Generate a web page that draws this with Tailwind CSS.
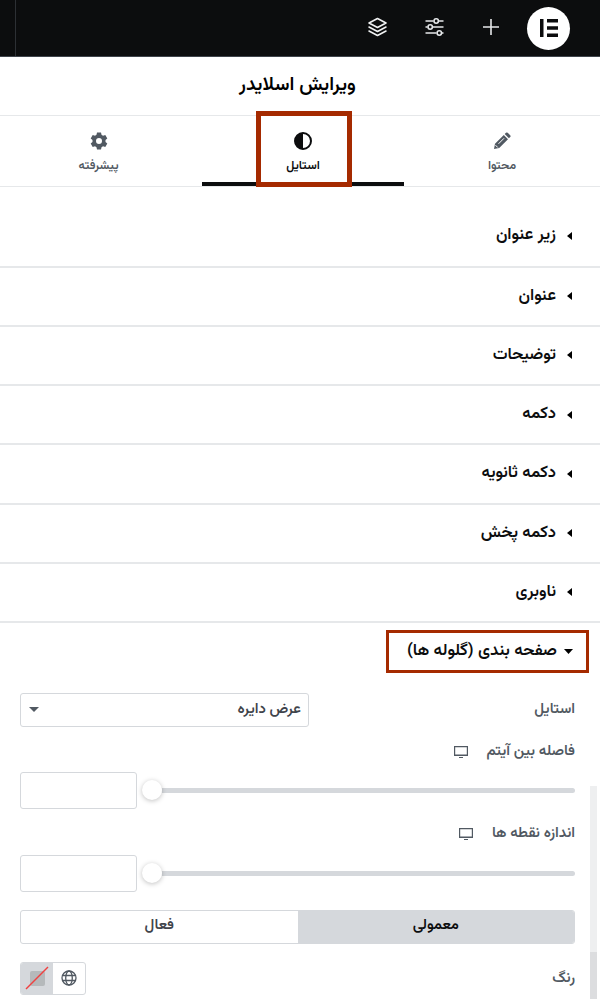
<!DOCTYPE html>
<html lang="fa" dir="rtl">

<head>
    <meta charset="UTF-8">
    <meta name="viewport" content="width=device-width, initial-scale=1.0">
    <script src="https://cdn.jsdelivr.net/npm/@tailwindcss/browser@4"></script>
    <title>ویرایش اسلایدر</title>
</head>

<body class="h-[999px] w-[600px] overflow-hidden bg-white font-['Vazirmatn','Noto_Sans_Arabic','DejaVu_Sans',sans-serif] text-[#0c0d0e]">
    <header class="flex h-[57px] items-center border-b border-[#3f444b] bg-[#0c0d0e] pr-[30px]">
        <div class="flex size-[43px] items-center justify-center rounded-full bg-white">
            <svg class="size-[18px]" viewBox="0 0 18 18" fill="#0c0d0e">
                <path d="M0 0h3.5v18H0zM7 0h11v3.6H7zM7 7.2h11v3.6H7zM7 14.4h11V18H7z" />
            </svg>
        </div>
        <svg class="mr-7 mb-0.5 size-4" viewBox="0 0 16 16" fill="none" stroke="#e6e8ea" stroke-width="1.6">
            <path d="M8 0v16M0 8h16" />
        </svg>
        <svg class="mr-[39px] mb-0.5 h-[18px] w-[19px]" viewBox="0 0 19 18" fill="none" stroke="#e6e8ea" stroke-width="1.6">
            <path d="M.5 3h8M14 3h4.500M.5 9h2M8 9h10.500M.5 15h11M17 15h1.500" />
            <circle cx="11.200" cy="3" r="2.200" />
            <circle cx="5.200" cy="9" r="2.200" />
            <circle cx="14.300" cy="15" r="2.200" />
        </svg>
        <svg class="mr-[38px] mb-0.5 h-5 w-[19px]" viewBox="0 0 19 20" fill="none" stroke="#f1f2f3" stroke-width="1.6" stroke-linejoin="round" stroke-linecap="round">
            <path d="M9.500 1.500L18 6l-8.500 4.500L1 6zM1 10l8.500 4.500L18 10M1 14l8.500 4.500L18 14" />
        </svg>
        <div class="mr-auto h-full w-4 border-r border-[#2d3034]"></div>
    </header>

    <h1 class="flex h-[59px] items-center justify-center border-b border-[#e6e8ea] pr-[5px] pb-0.5 text-[19.2px] font-semibold text-black">ویرایش اسلایدر</h1>

    <nav class="grid h-[71px] grid-cols-[196px_202px_202px] border-b border-[#e6e8ea] text-[12.3px] font-semibold text-[#515962]">
        <div class="flex flex-col items-center pt-4">
            <svg class="size-[18px]" viewBox="0 0 18 18" fill="#515962">
                <path d="M1 17l1-5.200L10.800 3l4.200 4.200L6.200 16zM11.700 2.100L13 .8q.8-.8 1.700 0l2.500 2.500q.8.900 0 1.700l-1.300 1.300z" />
                <path d="M5.500 11.800l5.500-5.500M2.500 13.200l2.300 2.300" stroke="#fff" stroke-width="1" />
            </svg>
            <span class="mt-[7px] leading-[18px]">محتوا</span>
        </div>
        <div class="relative flex flex-col items-center border-b-4 border-[#0c0d0e] pt-4 text-[#0c0d0e]">
            <svg class="size-[18px]" viewBox="0 0 18 18">
                <circle cx="9" cy="9" r="8" fill="#fff" stroke="#0c0d0e" stroke-width="2" />
                <path d="M9 1a8 8 0 0 0 0 16z" fill="#0c0d0e" />
            </svg>
            <span class="mt-[7px] leading-[18px]">استایل</span>
            <div class="absolute -top-[5px] left-[54px] h-[76px] w-24 border-[5px] border-[#a52a00]"></div>
        </div>
        <div class="flex flex-col items-center pt-4 pr-[5px]">
            <svg class="size-[18px]" viewBox="0 0 18 18" fill="#515962">
                <path fill-rule="evenodd" d="M7 .5h4l.5 2.300 1.500.9 2.300-.8 2 3.500-1.800 1.600v2l1.800 1.600-2 3.500-2.300-.8-1.500.9-.5 2.300H7l-.5-2.300-1.500-.9-2.300.8-2-3.500L2.500 10V8L.7 6.400l2-3.500 2.300.8 1.500-.9zM9 6a3 3 0 1 0 0 6 3 3 0 0 0 0-6z" />
            </svg>
            <span class="mt-[7px] leading-[18px]">پیشرفته</span>
        </div>
    </nav>

    <main>
        <ul class="mt-5 text-[16.6px] font-semibold">
            <li class="flex h-[60.500px] items-center gap-[11px] border-b-2 border-[#e6e8ea] pr-7 pb-px">
                <svg class="h-2 w-[5px]" viewBox="0 0 5 8"><path d="M5 0v8L0 4z" /></svg>
                <span>زیر عنوان</span>
            </li>
            <li class="flex h-[59.250px] items-center gap-[11px] border-b-2 border-[#e6e8ea] pr-7">
                <svg class="h-2 w-[5px]" viewBox="0 0 5 8"><path d="M5 0v8L0 4z" /></svg>
                <span>عنوان</span>
            </li>
            <li class="flex h-[59.250px] items-center gap-[11px] border-b-2 border-[#e6e8ea] pr-7">
                <svg class="h-2 w-[5px]" viewBox="0 0 5 8"><path d="M5 0v8L0 4z" /></svg>
                <span>توضیحات</span>
            </li>
            <li class="flex h-[59.250px] items-center gap-[11px] border-b-2 border-[#e6e8ea] pr-7">
                <svg class="h-2 w-[5px]" viewBox="0 0 5 8"><path d="M5 0v8L0 4z" /></svg>
                <span>دکمه</span>
            </li>
            <li class="flex h-[59.250px] items-center gap-[11px] border-b-2 border-[#e6e8ea] pr-7">
                <svg class="h-2 w-[5px]" viewBox="0 0 5 8"><path d="M5 0v8L0 4z" /></svg>
                <span>دکمه ثانویه</span>
            </li>
            <li class="flex h-[59.250px] items-center gap-[11px] border-b-2 border-[#e6e8ea] pr-7">
                <svg class="h-2 w-[5px]" viewBox="0 0 5 8"><path d="M5 0v8L0 4z" /></svg>
                <span>دکمه پخش</span>
            </li>
            <li class="flex h-[59.250px] items-center gap-[11px] border-b-2 border-[#e6e8ea] pr-7">
                <svg class="h-2 w-[5px]" viewBox="0 0 5 8"><path d="M5 0v8L0 4z" /></svg>
                <span>ناوبری</span>
            </li>
        </ul>

        <div class="mt-[6.500px] mr-[11px] flex h-[43px] w-[203px] items-center gap-[7px] border-[3px] border-[#a52a00] pr-[13px] text-[16.8px] font-semibold">
            <svg class="h-[5px] w-[9px] shrink-0" viewBox="0 0 9 5"><path d="M0 0h9L4.500 5z" /></svg>
            <span class="pt-px whitespace-nowrap">صفحه بندی (گلوله ها)</span>
        </div>

        <section class="mt-5 pr-[25px] pl-5 text-[14.900px] font-semibold text-[#515962]">
            <div class="flex h-[34px] items-center justify-between">
                <span class="pt-0.5">استایل</span>
                <div class="flex h-[34px] w-[289px] items-center justify-between rounded-[3px] border border-[#d5d8dc] pr-[7px] pl-2 text-[#3f444b]">
                    <span class="pt-0.5">عرض دایره</span>
                    <svg class="h-[5px] w-[10px]" viewBox="0 0 10 5" fill="#515962"><path d="M0 0h10L5 5z" /></svg>
                </div>
            </div>

            <div class="mt-[15px] flex h-5 items-center gap-[19px]">
                <span class="pt-0.5">فاصله بین آیتم</span>
                <svg class="h-3 w-[14px]" viewBox="0 0 14 12" fill="none" stroke="#515962"><path d="M.6.6h12.800v8.800H.6zM0 9.200h14M5 11.500h4" stroke-width="1.200" /></svg>
            </div>
            <div class="mt-[10px] flex h-[37px] items-center">
                <div class="h-[5px] w-[413px] rounded-r-full bg-[#d5d8dc]"></div>
                <div class="size-5 rounded-full bg-white shadow-[0_1px_5px_rgba(0,0,0,0.25)]"></div>
                <div class="mr-auto h-[37px] w-[117px] rounded-[3px] border border-[#d5d8dc]"></div>
            </div>

            <div class="mt-[15px] flex h-5 items-center gap-[19px]">
                <span class="pt-0.5">اندازه نقطه ها</span>
                <svg class="h-3 w-[14px]" viewBox="0 0 14 12" fill="none" stroke="#515962"><path d="M.6.6h12.800v8.800H.6zM0 9.200h14M5 11.500h4" stroke-width="1.200" /></svg>
            </div>
            <div class="mt-[11px] flex h-[37px] items-center">
                <div class="h-[5px] w-[413px] rounded-r-full bg-[#d5d8dc]"></div>
                <div class="size-5 rounded-full bg-white shadow-[0_1px_5px_rgba(0,0,0,0.25)]"></div>
                <div class="mr-auto h-[37px] w-[117px] rounded-[3px] border border-[#d5d8dc]"></div>
            </div>

            <div class="mt-[18px] grid h-[34px] grid-cols-2 overflow-hidden rounded-[3px] border border-[#d5d8dc]">
                <div class="flex items-center justify-center bg-[#d5d8dc] pb-px text-[#0c0d0e]">معمولی</div>
                <div class="flex items-center justify-center pb-px text-[#3f444b]">فعال</div>
            </div>

            <div class="mt-[18px] flex h-[33px] items-center justify-between">
                <span class="pt-0.5">رنگ</span>
                <div class="flex h-[33px] w-[66px] overflow-hidden rounded-[3px] border border-[#d5d8dc]">
                    <div class="flex flex-1 items-center justify-center">
                        <svg class="size-4" viewBox="0 0 16 16" fill="none" stroke="#515962" stroke-width="1.300">
                            <circle cx="8" cy="8" r="7" />
                            <ellipse cx="8" cy="8" rx="3.300" ry="7" />
                            <path d="M1.500 5.500h13M1.500 10.500h13" />
                        </svg>
                    </div>
                    <div class="flex w-8 items-center justify-center bg-[#d5d8dc]">
                        <svg class="size-6" viewBox="0 0 24 24">
                            <rect x="5" y="5" width="15" height="15" rx="2" fill="#b5b9bb" />
                            <path d="M1 23L23 1" stroke="#f04040" stroke-width="1.500" />
                        </svg>
                    </div>
                </div>
            </div>
        </section>
    </main>

    <!-- scrollbar -->
    <div class="absolute top-[786px] left-[590px] h-[213px] w-[7px] bg-[#eeeff0]">
        <div class="mt-[166px] h-[47px] bg-[#dcdddf]"></div>
    </div>
</body>

</html>
